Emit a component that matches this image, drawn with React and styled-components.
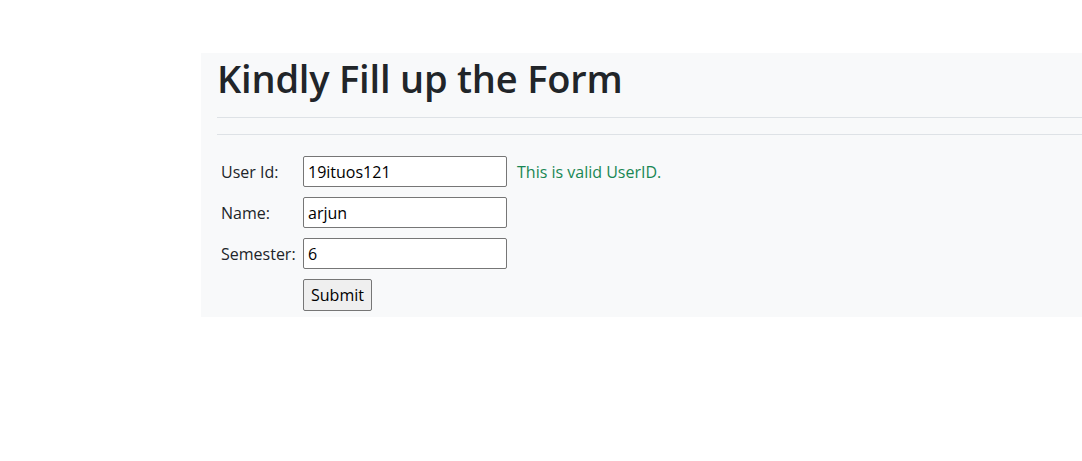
import styled, { createGlobalStyle } from 'styled-components';

const GlobalStyle = createGlobalStyle`
  html, body {
    margin: 0;
    background: #fff;
    font-family: "Open Sans", "Noto Sans", sans-serif;
    color: #212529;
  }
`;

const Page = styled.div`
  padding: 53px 0 0 201px;
  overflow: hidden;
`;

const Panel = styled.div`
  background: #f8f9fa;
  padding: 0 0 0 16px;
`;

const Title = styled.h1`
  margin: 0;
  padding-top: 1px;
  font-size: 38px;
  font-weight: 600;
  line-height: 48px;
  letter-spacing: -0.2px;
  color: #212529;
`;

const Rule = styled.hr`
  margin: ${p => p.top}px 0 0 0;
  border: 0;
  border-top: 1px solid #dee2e6;
`;

const FormTable = styled.table`
  margin-top: 15px;
  border-spacing: 2px;
  font-size: 16px;
`;

const LabelCell = styled.td`
  width: 76px;
  padding: 4px 0 4px 2px;
  color: #212529;
  white-space: nowrap;
`;

const Cell = styled.td`
  padding: 4px;
`;

const Input = styled.input`
  box-sizing: border-box;
  width: 204px;
  height: 31px;
  padding: 1px 4px;
  border: 1px solid #767676;
  border-radius: 2px;
  background: #fff;
  font-family: "Open Sans", "Noto Sans", sans-serif;
  font-size: 16px;
  color: #000;
`;

const Valid = styled.span`
  color: #198754;
  font-size: 16px;
`;

const Button = styled.button`
  box-sizing: border-box;
  height: 32px;
  padding: 0 7px;
  border: 1px solid #767676;
  border-radius: 2px;
  background: #efefef;
  font-family: "Open Sans", "Noto Sans", sans-serif;
  font-size: 16px;
  color: #000;
`;

export default function App() {
  return (
    <>
      <GlobalStyle />
      <Page>
        <Panel>
          <Title>Kindly Fill up the Form</Title>
          <Rule top={15} />
          <Rule top={16} />
          <FormTable>
            <tbody>
              <tr>
                <LabelCell>User Id:</LabelCell>
                <Cell><Input defaultValue="19ituos121" /></Cell>
                <Cell><Valid>This is valid UserID.</Valid></Cell>
              </tr>
              <tr>
                <LabelCell>Name:</LabelCell>
                <Cell><Input defaultValue="arjun" /></Cell>
                <Cell />
              </tr>
              <tr>
                <LabelCell>Semester:</LabelCell>
                <Cell><Input defaultValue="6" /></Cell>
                <Cell />
              </tr>
              <tr>
                <LabelCell />
                <Cell><Button>Submit</Button></Cell>
                <Cell />
              </tr>
            </tbody>
          </FormTable>
        </Panel>
      </Page>
    </>
  );
}
